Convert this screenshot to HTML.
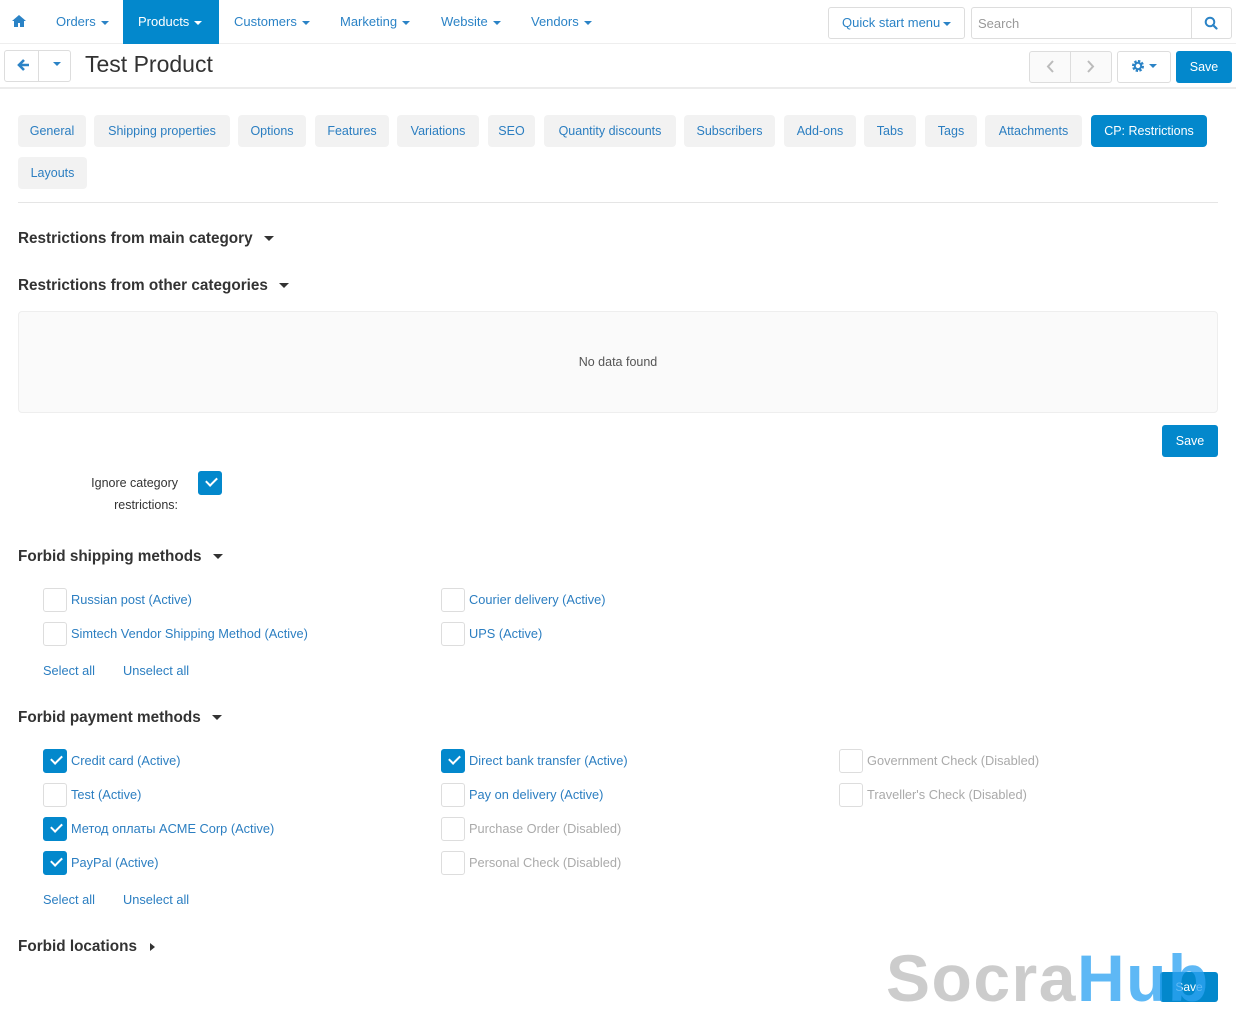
<!DOCTYPE html>
<html><head><meta charset="utf-8"><style>
*{box-sizing:border-box;margin:0;padding:0}
body{width:1236px;height:1015px;overflow:hidden;background:#fff;font-family:"Liberation Sans","Noto Sans CJK SC",sans-serif;font-size:13px;color:#333;position:relative}
.a{position:absolute;white-space:nowrap}
.nav{color:#2b83c6;font-size:13px;top:14px}
.car{display:inline-block;width:0;height:0;border-left:4px solid transparent;border-right:4px solid transparent;border-top:4px solid currentColor;vertical-align:middle;margin-left:5px}
.tab{position:absolute;height:32px;background:#f2f2f2;border-radius:4px;color:#2b7ec1;font-size:12.5px;line-height:32px;text-align:center}
.h{position:absolute;font-weight:bold;font-size:15.3px;color:#333;white-space:nowrap}
.h .car{border-left-width:5px;border-right-width:5px;border-top-width:5px;margin-left:11px;color:#333}
.cb{position:absolute;width:24px;height:24px;border:1px solid #ddd;border-radius:3px;background:#fff}
.cb.on{background:#0388cc;border-color:#0388cc}
.cb.on::after{content:"";position:absolute;left:7px;top:5px;width:9px;height:5px;border-left:2.5px solid #fff;border-bottom:2.5px solid #fff;transform:rotate(-45deg)}
.lb{position:absolute;color:#2b7ec1;font-size:12.8px;white-space:nowrap}
.lb.d{color:#aaa}
.btn{position:absolute;border:1px solid #ddd;border-radius:3px;background:#fff}
.save{position:absolute;background:#0388cc;color:#fff;border-radius:3px;text-align:center;font-size:12.5px}
</style></head><body>
<div class="a" style="left:0;top:0;width:1236px;height:44px;border-bottom:1px solid #eee"></div>
<svg class="a" style="left:12px;top:15px" width="14" height="12" viewBox="0 0 14 12"><path d="M7 0L0 6h2v6h4V8h2v4h4V6h2z" fill="#2b83c6"/></svg>
<div class="a nav" style="left:56px">Orders<span class="car"></span></div>
<div class="a" style="left:123px;top:0;width:96px;height:44px;background:#0388cc"></div>
<div class="a nav" style="left:138px;color:#fff">Products<span class="car"></span></div>
<div class="a nav" style="left:234px">Customers<span class="car"></span></div>
<div class="a nav" style="left:340px">Marketing<span class="car"></span></div>
<div class="a nav" style="left:441px">Website<span class="car"></span></div>
<div class="a nav" style="left:531px">Vendors<span class="car"></span></div>
<div class="btn" style="left:828px;top:7px;width:137px;height:32px"></div>
<div class="a nav" style="left:842px;top:15px">Quick start menu<span class="car" style="margin-left:3px"></span></div>
<div class="btn" style="left:971px;top:7px;width:261px;height:32px"></div>
<div class="a" style="left:1191px;top:8px;width:1px;height:30px;background:#ddd"></div>
<div class="a" style="left:978px;top:16px;color:#999;font-size:13px">Search</div>
<svg class="a" style="left:1204px;top:16px" width="14" height="14" viewBox="0 0 14 14"><circle cx="6" cy="6" r="4.3" fill="none" stroke="#2b83c6" stroke-width="2"/><path d="M9 9l3.5 3.5" stroke="#2b83c6" stroke-width="2.2" stroke-linecap="round"/></svg>
<div class="a" style="left:0;top:87px;width:1236px;height:2px;background:#ececec"></div>
<div class="btn" style="left:4px;top:50px;width:67px;height:32px"></div>
<div class="a" style="left:38px;top:51px;width:1px;height:30px;background:#ddd"></div>
<svg class="a" style="left:17px;top:58px" width="14" height="14" viewBox="0 0 14 14"><path d="M7 2L2 7l5 5M2 7h10" fill="none" stroke="#2b83c6" stroke-width="2.6"/></svg>
<div class="a" style="left:53px;top:62px;color:#2b83c6"><span class="car" style="margin:0;vertical-align:top"></span></div>
<div class="a" style="left:85px;top:51px;font-size:23px;color:#333">Test Product</div>
<div class="btn" style="left:1029px;top:51px;width:83px;height:32px;background:#fafafa"></div>
<div class="a" style="left:1070px;top:52px;width:1px;height:30px;background:#ddd"></div>
<svg class="a" style="left:1045px;top:60px" width="10" height="13"><path d="M8 1L3 6.5 8 12" fill="none" stroke="#bbb" stroke-width="2"/></svg>
<svg class="a" style="left:1086px;top:60px" width="10" height="13"><path d="M2 1l5 5.5L2 12" fill="none" stroke="#bbb" stroke-width="2"/></svg>
<div class="btn" style="left:1117px;top:51px;width:54px;height:32px"></div>
<svg class="a" style="left:1131px;top:59px" width="14" height="14" viewBox="0 0 14 14"><circle cx="7" cy="7" r="4.5" fill="none" stroke="#2b83c6" stroke-width="3" stroke-dasharray="2.2 1.3"/><circle cx="7" cy="7" r="3.2" fill="none" stroke="#2b83c6" stroke-width="2"/></svg>
<div class="a" style="left:1149px;top:64px;color:#2b83c6"><span class="car" style="margin:0;vertical-align:top"></span></div>
<div class="save" style="left:1176px;top:51px;width:56px;height:32px;line-height:32px">Save</div>
<div class="tab" style="left:18px;top:115px;width:68px">General</div>
<div class="tab" style="left:94px;top:115px;width:136px">Shipping properties</div>
<div class="tab" style="left:238px;top:115px;width:68px">Options</div>
<div class="tab" style="left:315px;top:115px;width:74px">Features</div>
<div class="tab" style="left:397px;top:115px;width:82px">Variations</div>
<div class="tab" style="left:488px;top:115px;width:47px">SEO</div>
<div class="tab" style="left:544px;top:115px;width:132px">Quantity discounts</div>
<div class="tab" style="left:684px;top:115px;width:91px">Subscribers</div>
<div class="tab" style="left:784px;top:115px;width:72px">Add-ons</div>
<div class="tab" style="left:864px;top:115px;width:52px">Tabs</div>
<div class="tab" style="left:925px;top:115px;width:52px">Tags</div>
<div class="tab" style="left:985px;top:115px;width:97px">Attachments</div>
<div class="tab" style="left:1091px;top:115px;width:116px;background:#0388cc;color:#fff">CP: Restrictions</div>
<div class="tab" style="left:18px;top:157px;width:69px">Layouts</div>
<div class="a" style="left:18px;top:202px;width:1200px;height:1px;background:#e5e5e5"></div>
<div class="h" style="left:18px;top:230px">Restrictions from main category<span class="car"></span></div>
<div class="h" style="left:18px;top:277px">Restrictions from other categories<span class="car"></span></div>
<div class="a" style="left:18px;top:311px;width:1200px;height:102px;background:#fafafa;border:1px solid #eee;border-radius:4px"></div>
<div class="a" style="left:0;top:355px;width:1236px;text-align:center;color:#555;font-size:12.5px">No data found</div>
<div class="save" style="left:1162px;top:425px;width:56px;height:32px;line-height:32px">Save</div>
<div class="a" style="left:60px;top:472px;width:118px;text-align:right;font-size:12.5px;line-height:22px;color:#333;white-space:normal">Ignore category restrictions:</div>
<div class="cb on" style="left:198px;top:471px"></div>
<div class="h" style="left:18px;top:548px">Forbid shipping methods<span class="car"></span></div>
<div class="cb" style="left:43px;top:588px"></div><div class="lb" style="left:71px;top:592px">Russian post (Active)</div>
<div class="cb" style="left:441px;top:588px"></div><div class="lb" style="left:469px;top:592px">Courier delivery (Active)</div>
<div class="cb" style="left:43px;top:622px"></div><div class="lb" style="left:71px;top:626px">Simtech Vendor Shipping Method (Active)</div>
<div class="cb" style="left:441px;top:622px"></div><div class="lb" style="left:469px;top:626px">UPS (Active)</div>
<div class="lb" style="left:43px;top:663px">Select all</div><div class="lb" style="left:123px;top:663px">Unselect all</div>
<div class="h" style="left:18px;top:709px">Forbid payment methods<span class="car"></span></div>
<div class="cb on" style="left:43px;top:749px"></div><div class="lb" style="left:71px;top:753px">Credit card (Active)</div>
<div class="cb" style="left:43px;top:783px"></div><div class="lb" style="left:71px;top:787px">Test (Active)</div>
<div class="cb on" style="left:43px;top:817px"></div><div class="lb" style="left:71px;top:821px">Метод оплаты ACME Corp (Active)</div>
<div class="cb on" style="left:43px;top:851px"></div><div class="lb" style="left:71px;top:855px">PayPal (Active)</div>
<div class="cb on" style="left:441px;top:749px"></div><div class="lb" style="left:469px;top:753px">Direct bank transfer (Active)</div>
<div class="cb" style="left:441px;top:783px"></div><div class="lb" style="left:469px;top:787px">Pay on delivery (Active)</div>
<div class="cb" style="left:441px;top:817px"></div><div class="lb d" style="left:469px;top:821px">Purchase Order (Disabled)</div>
<div class="cb" style="left:441px;top:851px"></div><div class="lb d" style="left:469px;top:855px">Personal Check (Disabled)</div>
<div class="cb" style="left:839px;top:749px"></div><div class="lb d" style="left:867px;top:753px">Government Check (Disabled)</div>
<div class="cb" style="left:839px;top:783px"></div><div class="lb d" style="left:867px;top:787px">Traveller's Check (Disabled)</div>
<div class="lb" style="left:43px;top:892px">Select all</div><div class="lb" style="left:123px;top:892px">Unselect all</div>
<div class="h" style="left:18px;top:938px">Forbid locations<span style="display:inline-block;width:0;height:0;border-top:4px solid transparent;border-bottom:4px solid transparent;border-left:5px solid #333;margin-left:13px;vertical-align:middle"></span></div>
<div class="save" style="left:1160px;top:972px;width:58px;height:30px;line-height:30px;font-size:12px">Save</div>
<div class="a" style="left:886px;top:938px;font-size:66px;font-weight:bold;letter-spacing:1.5px;font-family:'Liberation Sans',sans-serif;line-height:80px;opacity:.85"><span style="color:#c4c4c4">Socra</span><span style="color:#2ea3f2;opacity:.9">Hub</span></div>
</body></html>
